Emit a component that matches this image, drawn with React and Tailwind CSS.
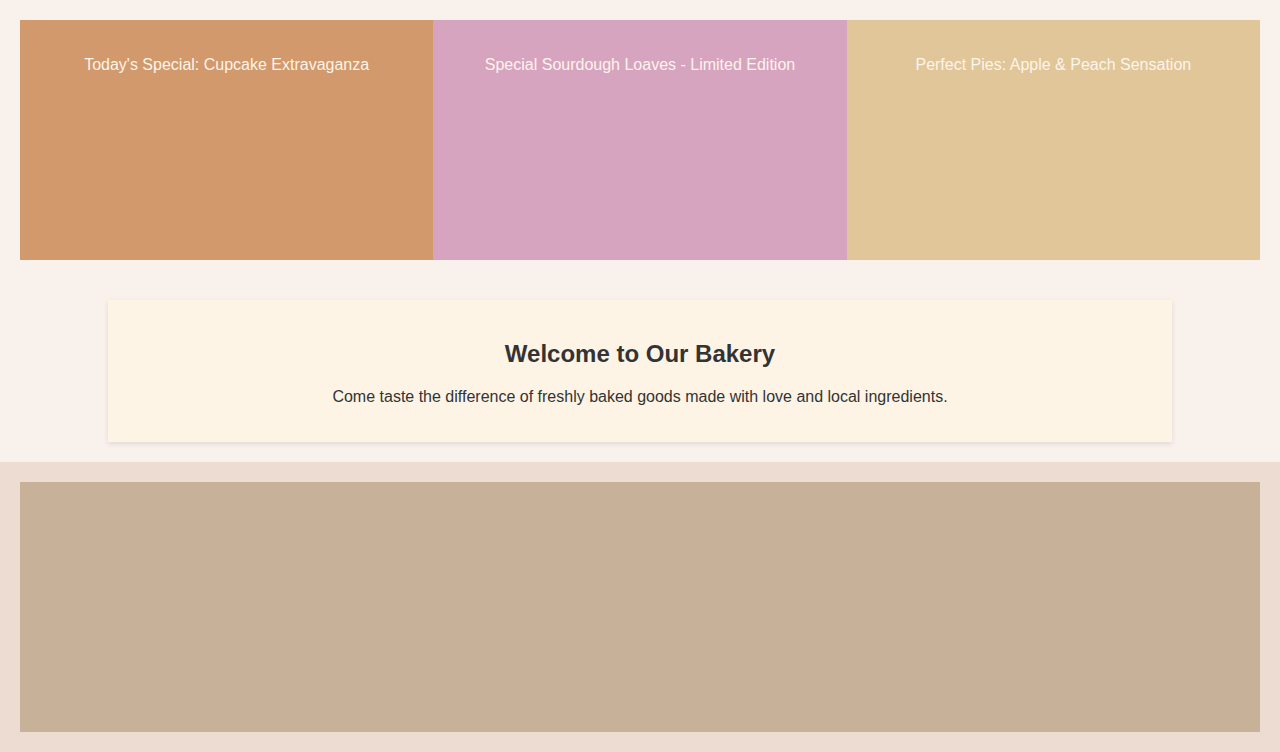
const specials = [
  { title: "Today's Special: Cupcake Extravaganza", bg: "bg-[#d2996c]" },
  { title: "Special Sourdough Loaves - Limited Edition", bg: "bg-[#d7a4c0]" },
  { title: "Perfect Pies: Apple & Peach Sensation", bg: "bg-[#e0c699]" },
];

export default function App() {
  return (
    <div className="min-h-screen bg-[#f9f1eb] font-['Liberation_Sans',Arial,sans-serif] text-[#333]">
      {/* Specials banner */}
      <section className="p-5">
        <div className="grid grid-cols-3 h-[240px]">
          {specials.map((s) => (
            <div key={s.title} className={`${s.bg} pt-[33px] px-5 text-center`}>
              <p className="text-base leading-[24px] text-[#fdf4ea]">{s.title}</p>
            </div>
          ))}
        </div>
      </section>

      {/* Welcome card */}
      <section className="px-5 pt-5 pb-5">
        <div className="w-[1064px] mx-auto bg-[#fdf4e6] shadow-[0_2px_5px_rgba(0,0,0,0.1)] pt-[40px] pb-[33px] text-center">
          <h2 className="text-2xl leading-[28px] font-bold">Welcome to Our Bakery</h2>
          <p className="mt-[17px] text-base leading-[24px]">
            Come taste the difference of freshly baked goods made with love and local ingredients.
          </p>
        </div>
      </section>

      {/* Gallery */}
      <section className="bg-[#ecdcd2] p-5">
        <div className="h-[250px] bg-[#c8b199]" />
      </section>
    </div>
  );
}
